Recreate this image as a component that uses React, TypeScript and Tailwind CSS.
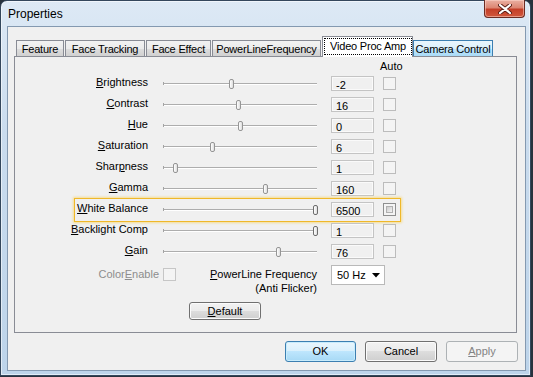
import React from "react";

const rows = [
  { label: "Brightness", u: 0, value: "-2", pos: 68 },
  { label: "Contrast", u: 0, value: "16", pos: 75 },
  { label: "Hue", u: 0, value: "0", pos: 77 },
  { label: "Saturation", u: 0, value: "6", pos: 49 },
  { label: "Sharpness", u: 4, value: "1", pos: 12 },
  { label: "Gamma", u: 0, value: "160", pos: 102 },
  { label: "White Balance", u: 0, value: "6500", pos: 152, focus: true },
  { label: "Backlight Comp", u: 0, value: "1", pos: 152, dark: true },
  { label: "Gain", u: 0, value: "76", pos: 115 },
];

const grayBtn =
  "bg-[linear-gradient(#f2f2f2_0%,#ebebeb_50%,#dddddd_50%,#cfcfcf_100%)]";

function Mnemonic({ text, u }: { text: string; u: number }) {
  return (
    <>
      {text.slice(0, u)}
      <span className="underline decoration-1 underline-offset-[1px]">{text[u]}</span>
      {text.slice(u + 1)}
    </>
  );
}

function Slider({ pos, dark }: { pos: number; dark?: boolean }) {
  return (
    <div className="relative w-[154px] h-[11px] flex items-center">
      <div className="w-px h-[3px] bg-[#a3a3a3]" />
      <div className="flex-1 h-[2px] border-t border-[#adadad] bg-white" />
      <div
        className={`absolute top-[1px] w-[5px] h-[10px] rounded-[2px] border bg-[linear-gradient(90deg,#ffffff,#dedede)] ${
          dark ? "border-[#6d6d6d]" : "border-[#959595]"
        }`}
        style={{ left: pos - 2 }}
      />
    </div>
  );
}

function Check({ focus }: { focus?: boolean }) {
  if (focus) {
    return (
      <div className="w-[13px] h-[13px] border border-[#8e8f8f] bg-[#f4f4f4] p-[2px]">
        <div className="w-full h-full border border-[#b0b0b0] bg-[linear-gradient(135deg,#cbcbcb,#f4f4f4)]" />
      </div>
    );
  }
  return <div className="w-[13px] h-[13px] border border-[#bcbcbc] bg-[#f4f4f4]" />;
}

export default function App() {
  return (
    <div className="w-[533px] h-[377px] bg-[#28323d] overflow-hidden font-['Liberation_Sans',Arial,sans-serif] text-[11px] leading-[13px] text-black">
      <div className="relative w-[531px] h-[376px] rounded-t-[7px] border border-[#34475c] shadow-[inset_0_0_0_1px_rgba(255,255,255,0.55)] bg-[linear-gradient(180deg,#dde9f5_0%,#cadcee_35%,#bdd4ea_100%)] flex flex-col">
        {/* title bar */}
        <div className="h-[25px] flex items-center pl-[7px] pt-[2px] text-[12px]">Properties</div>
        <div className="absolute top-[-1px] right-[5px] w-[41px] h-[18px] rounded-b-[4px] border border-t-0 border-[#6b2b22] bg-[linear-gradient(#eab0a2_0%,#dc8672_45%,#c43f28_55%,#d0573c_100%)] shadow-[inset_0_0_0_1px_rgba(255,220,210,0.5)] flex items-center justify-center">
          <svg width="14" height="10" viewBox="0 0 14 10">
            <path d="M2 1 L12 9 M12 1 L2 9" stroke="#5a1e16" strokeWidth="4" strokeLinecap="round" />
            <path d="M2 1 L12 9 M12 1 L2 9" stroke="#ffffff" strokeWidth="2.2" strokeLinecap="round" />
          </svg>
        </div>

        {/* client area */}
        <div className="ml-[6px] w-[519px] h-[345px] border border-[#8499b0] bg-[#f0f0f0] flex flex-col">
          {/* tabs */}
          <div className="pt-[9px] pl-[8px] flex items-end h-[30px] tracking-[-0.2px]">
            <div className={`w-[48px] h-[17px] border border-b-0 border-[#898c95] ${grayBtn} flex items-center justify-center`}>
              Feature
            </div>
            <div className={`ml-[1px] w-[80px] h-[17px] border border-b-0 border-[#898c95] ${grayBtn} flex items-center justify-center`}>
              Face Tracking
            </div>
            <div className={`ml-[1px] w-[65px] h-[17px] border border-b-0 border-[#898c95] ${grayBtn} flex items-center justify-center`}>
              Face Effect
            </div>
            <div className={`ml-[1px] w-[109px] h-[17px] border border-b-0 border-[#898c95] ${grayBtn} flex items-center justify-center`}>
              PowerLineFrequency
            </div>
            <div className="relative z-[1] ml-[1px] w-[91px] h-[21px] border border-b-0 border-[#898c95] bg-white flex pl-[1px] pt-[1px] pb-[2px]">
              <div className="flex-1 border border-dotted border-black flex items-center justify-center">
                Video Proc Amp
              </div>
            </div>
            <div className="w-[80px] h-[17px] border border-b-0 border-[#3c7fb1] bg-[linear-gradient(#eaf6fd_0%,#d9f0fc_50%,#bee6fd_50%,#a7d9f5_100%)] flex items-center justify-center">
              Camera Control
            </div>
          </div>

          {/* panel */}
          <div className="-mt-[1px] ml-[6px] w-[503px] h-[277px] border border-[#898c95] bg-[#f0f0f0] flex flex-col">
            <div className="h-[16px] pt-[3px] pl-[365px]">Auto</div>
            {rows.map((r) => (
              <div key={r.label} className="relative h-[21px] flex items-center">
                {r.focus && (
                  <div className="absolute left-[59px] top-[-1px] w-[327px] h-[24px] border border-[#efb82a] shadow-[0_0_2px_1px_rgba(250,214,110,0.7)]" />
                )}
                <div className="w-[133px] self-start pt-[3px] text-right whitespace-nowrap">
                  <Mnemonic text={r.label} u={r.u} />
                </div>
                <div className="ml-[15px]">
                  <Slider pos={r.pos} dark={r.dark || r.focus} />
                </div>
                <div className="ml-[14px] w-[43px] h-[15px] border border-[#c4c4c4] bg-[#f0f0f0] shadow-[inset_0_0_0_1px_#fafafa] pl-[4px] pt-[2px]">
                  {r.value}
                </div>
                <div className="ml-[9px]">
                  <Check focus={r.focus} />
                </div>
              </div>
            ))}

            {/* ColorEnable / PowerLine */}
            <div className="mt-[3px] flex items-start">
              <div className="w-[144px] mt-[3px] text-right text-[#8d8d8d]">
                <Mnemonic text="ColorEnable" u={5} />
              </div>
              <div className="ml-[4px] mt-[3px] w-[13px] h-[13px] border border-[#c6c6c6] bg-[#f4f4f4]" />
              <div className="w-[141px] mt-[2px] leading-[14px] text-right">
                <div>
                  <Mnemonic text="PowerLine Frequency" u={0} />
                </div>
                <div>(Anti Flicker)</div>
              </div>
              <div className="ml-[14px] w-[54px] h-[20px] border border-[#b9b9b9] bg-white flex items-center pl-[5px] pr-[4px]">
                <span className="flex-1">50 Hz</span>
                <svg width="8" height="5" viewBox="0 0 8 5">
                  <path d="M0 0 H8 L4 4.5 Z" fill="#000" />
                </svg>
              </div>
            </div>
            <div className={`ml-[174px] mt-[7px] w-[72px] h-[18px] rounded-[3px] border border-[#707070] ${grayBtn} shadow-[inset_0_0_0_1px_#fbfbfb] flex items-center justify-center`}>
              <span>
                <Mnemonic text="Default" u={0} />
              </span>
            </div>
          </div>

          {/* dialog buttons */}
          <div className="mt-[8px] flex justify-end gap-[9px] pr-[7px]">
            <div className="w-[71px] h-[21px] rounded-[3px] border border-[#3c7fb1] bg-[linear-gradient(#eaf6fd_0%,#d9f0fc_50%,#bee6fd_50%,#a7d9f5_100%)] shadow-[inset_0_0_0_1px_#c8ecfc] flex items-center justify-center">
              OK
            </div>
            <div className={`w-[72px] h-[21px] rounded-[3px] border border-[#707070] ${grayBtn} shadow-[inset_0_0_0_1px_#fbfbfb] flex items-center justify-center`}>
              Cancel
            </div>
            <div className="w-[72px] h-[21px] rounded-[3px] border border-[#adb2b5] bg-[#f4f4f4] text-[#838383] flex items-center justify-center">
              <span>
                <Mnemonic text="Apply" u={0} />
              </span>
            </div>
          </div>
        </div>
      </div>
    </div>
  );
}
